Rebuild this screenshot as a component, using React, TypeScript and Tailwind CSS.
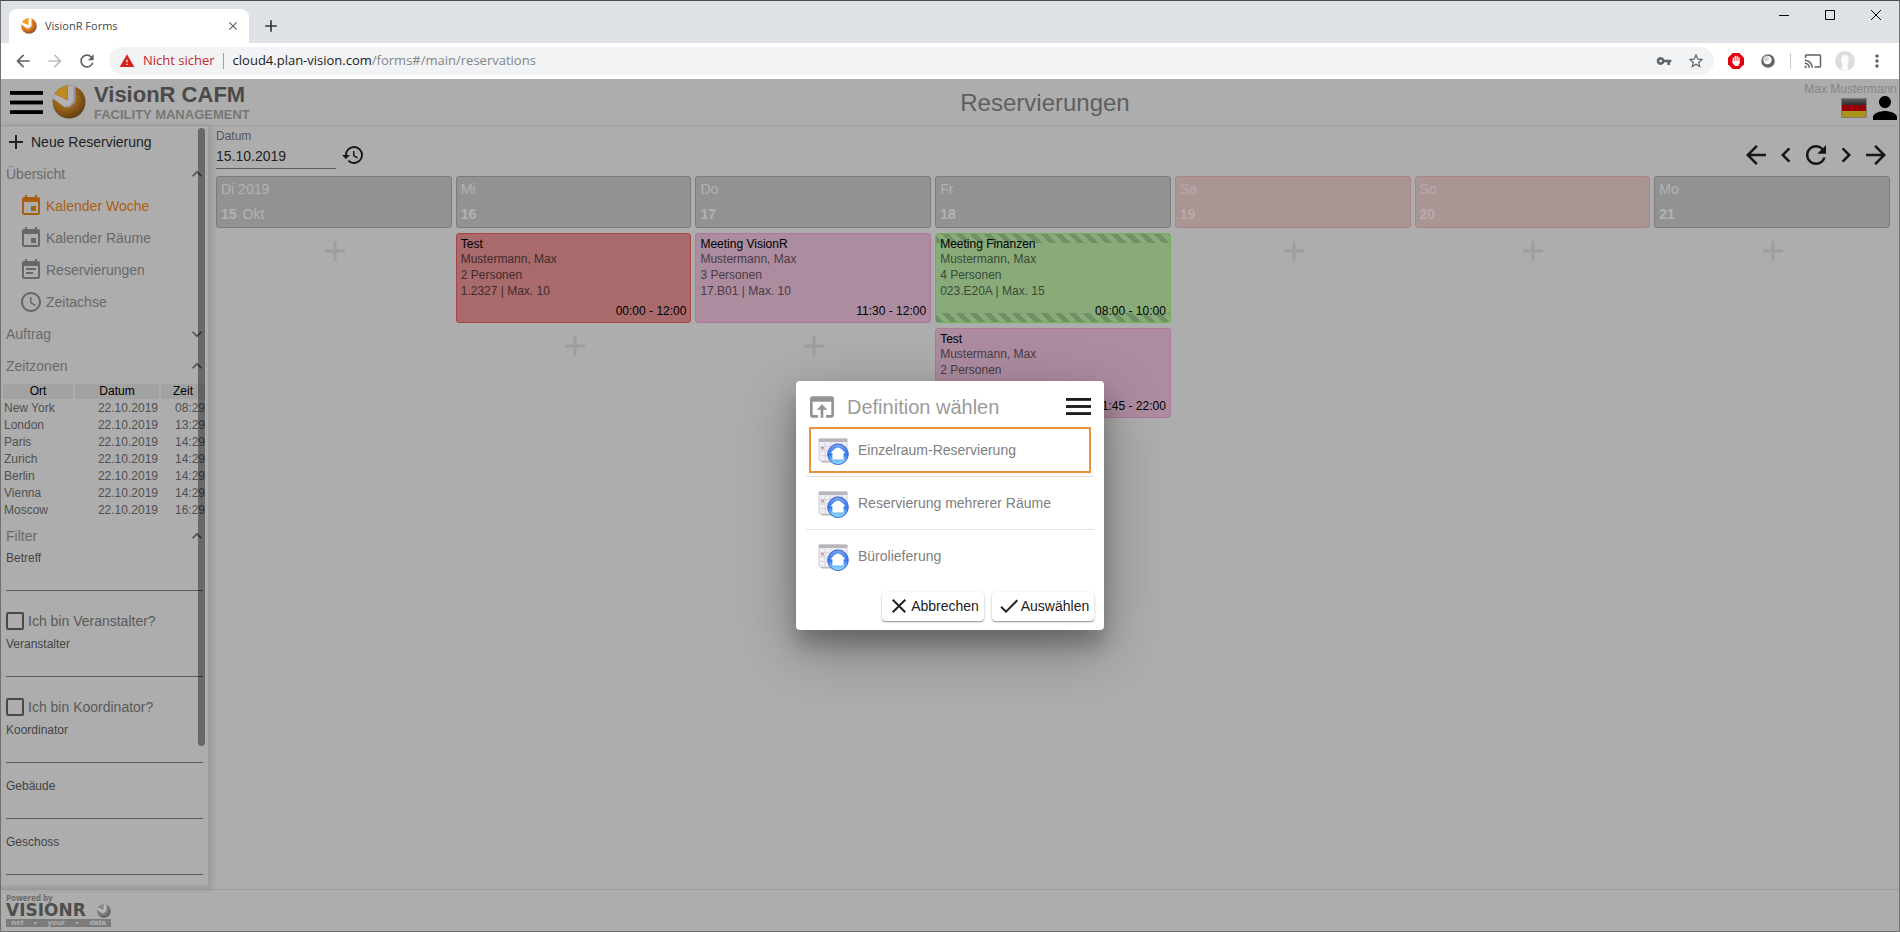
import React from "react";
import {
  MdAdd,
  MdArrowBack,
  MdArrowForward,
  MdCast,
  MdCheck,
  MdChevronLeft,
  MdChevronRight,
  MdClose,
  MdEvent,
  MdEventNote,
  MdExpandLess,
  MdExpandMore,
  MdHistory,
  MdMoreVert,
  MdOpenInBrowser,
  MdAccessTime,
  MdRefresh,
  MdStarBorder,
  MdVpnKey,
  MdWarning,
} from "react-icons/md";

function Sphere({ className, tone = "bright" }: { className: string; tone?: "bright" | "dim" | "gray" }) {
  const palette = {
    bright: ["#ffb74a", "#e07a1c", "#8a4a20", "#ffffff", "#f9a01b"],
    dim: ["#b07a24", "#95601c", "#5f3c14", "#b3b0b6", "#bd8a20"],
    gray: ["#a0a0a0", "#7d7d7d", "#555555", "#bcbcbc", "#8a8a8a"],
  }[tone];
  const id = "sphere-" + tone;
  return (
    <svg viewBox="0 0 32 32" className={className} aria-hidden="true">
      <defs>
        <radialGradient id={id} cx="0.38" cy="0.35" r="0.7">
          <stop offset="0" stopColor={palette[0]} />
          <stop offset="0.55" stopColor={palette[1]} />
          <stop offset="1" stopColor={palette[2]} />
        </radialGradient>
      </defs>
      <circle cx="16" cy="16" r="15.5" fill={`url(#${id})`} />
      <path d="M0.6 12.5 L2.5 8.5 L15 14.5 V0.5 L22 1.5 V16 L17 21 L12 21 Z" fill={palette[3]} />
      <path d="M3 8.2 A15.5 15.5 0 0 1 14.5 0.6 V13.6 Z" fill={palette[4]} />
      <path d="M22 1.6 L20 2.5 V15 L16.5 19 L12 20 L15 21.6 L18 21 L22 16.6 Z" fill="#77707a" opacity="0.4" />
    </svg>
  );
}

function Burger({ className }: { className: string }) {
  return (
    <svg viewBox="0 0 31 24" preserveAspectRatio="none" className={className} fill="currentColor" aria-hidden="true">
      <rect width="31" height="4" />
      <rect y="10" width="31" height="4" />
      <rect y="20" width="31" height="4" />
    </svg>
  );
}

function BrowserChrome() {
  return (
    <div className="shrink-0 font-['Open_Sans',sans-serif]">
      <div className="flex h-[42px] items-end bg-[#dee1e6] pl-2">
        <div className="flex h-[34px] w-60 items-center rounded-t-lg bg-white pr-[9px] pl-3">
          <Sphere className="size-4" />
          <span className="ml-2 flex-1 text-[11px] text-[#45494d]">VisionR Forms</span>
          <button aria-label="Tab schließen" className="text-[#5f6368]">
            <MdClose className="size-[14px]" />
          </button>
        </div>
        <button aria-label="Neuer Tab" className="mb-[7px] ml-3 text-[#35383b]">
          <MdAdd className="size-5" />
        </button>
        <div className="ml-auto flex h-[42px] items-start pt-[9px] pr-[18px] text-black">
          <button aria-label="Minimieren" className="mr-9">
            <svg viewBox="0 0 10 10" className="size-[10px]"><path d="M0 5.5H10" stroke="currentColor" /></svg>
          </button>
          <button aria-label="Maximieren" className="mr-9">
            <svg viewBox="0 0 10 10" className="size-[10px]"><path d="M.5 .5H9.5V9.5H.5Z" fill="none" stroke="currentColor" /></svg>
          </button>
          <button aria-label="Schließen">
            <svg viewBox="0 0 10 10" className="size-[10px]"><path d="M0 0L10 10M10 0L0 10" stroke="currentColor" /></svg>
          </button>
        </div>
      </div>
      <div className="flex h-9 items-center bg-white pr-3 pl-3 text-[#5f6368]">
        <button aria-label="Zurück"><MdArrowBack className="size-5" /></button>
        <button aria-label="Vorwärts" className="ml-3 text-[#bcbec0]"><MdArrowForward className="size-5" /></button>
        <button aria-label="Neu laden" className="ml-3"><MdRefresh className="size-5" /></button>
        <div className="ml-3 flex h-7 flex-1 items-center rounded-full bg-[#f1f3f4] pr-[9px] pl-[10px] text-[13px]">
          <MdWarning className="size-4 text-[#d6231f]" />
          <span className="ml-2 text-[#c8242c]">Nicht sicher</span>
          <span className="mr-[9px] ml-2 h-4 w-px bg-[#9aa0a6]" />
          <a href="#/main/reservations" className="flex-1 text-[#202124]">
            cloud4.plan-vision.com<span className="text-[#80868b]">/forms#/main/reservations</span>
          </a>
          <button aria-label="Passwörter"><MdVpnKey className="size-4" /></button>
          <button aria-label="Lesezeichen" className="ml-[15px]"><MdStarBorder className="size-[18px]" /></button>
        </div>
        <div className="flex items-center pl-[14px]">
          <button aria-label="Werbeblocker">
            <svg viewBox="0 0 16 16" className="size-4">
              <path d="M4.7 0H11.3L16 4.7V11.3L11.3 16H4.7L0 11.3V4.7Z" fill="#e2000f" />
              <path d="M5.3 8.5V5.2M7.2 8V3.4M9.1 8V3.4M11 9V4.6" stroke="#fff" strokeWidth="1.3" strokeLinecap="round" />
              <path d="M4.6 8H11.7V10L10.3 13H7.2L4.2 9.6L4.6 8Z" fill="#fff" />
            </svg>
          </button>
          <button aria-label="Erweiterung" className="ml-[17px]">
            <svg viewBox="0 0 14 14" className="size-[14px]">
              <circle cx="7" cy="7" r="6.8" fill="#666" />
              <circle cx="6.4" cy="6" r="4.2" fill="#fff" />
              <circle cx="5" cy="4.6" r="3" fill="#bbb" opacity="0.6" />
            </svg>
          </button>
          <span className="ml-[15px] h-4 w-px bg-[#c9ccd0]" />
          <button aria-label="Streamen" className="ml-[13px]"><MdCast className="size-[18px]" /></button>
          <button aria-label="Profil" className="ml-[13px]">
            <svg viewBox="0 0 20 20" className="size-5">
              <circle cx="10" cy="10" r="10" fill="#dcdcde" />
              <path d="M10 4C7 4 6 6.5 6.3 9C6.5 11 7.4 12.4 7.6 14L6.5 19.3H13.5L12.4 14C12.6 12.4 13.5 11 13.7 9C14 6.5 13 4 10 4Z" fill="#fafcfd" />
            </svg>
          </button>
          <button aria-label="Menü" className="ml-3"><MdMoreVert className="size-5" /></button>
        </div>
      </div>
    </div>
  );
}

function AppHeader() {
  return (
    <header className="flex h-[47px] shrink-0 items-center border-b border-[#9f9f9f]">
      <div className="flex w-[286px] items-center pl-[9px]">
        <button aria-label="Hauptmenü" className="text-black"><Burger className="h-[23px] w-[33px]" /></button>
        <Sphere className="ml-[9px] size-[34px]" tone="dim" />
        <div className="ml-2 pt-[3px] font-bold">
          <div className="text-[22px] leading-[22px] text-[#4a4a4a]">VisionR CAFM</div>
          <div className="text-[13px] leading-[18px] text-[#777777]">FACILITY MANAGEMENT</div>
        </div>
      </div>
      <h1 className="flex-1 pt-[2px] text-center text-2xl text-[#5f5f5f]">Reservierungen</h1>
      <div className="flex w-24 flex-col items-end pr-[2px] pb-[2px]">
        <div className="text-xs leading-[14px] whitespace-nowrap text-[#858585]">Max Mustermann</div>
        <div className="flex items-center">
          <button aria-label="Sprache">
            <svg viewBox="0 0 26 20" className="h-5 w-[26px]">
              <defs>
                <linearGradient id="flag-black" x1="0" y1="0" x2="0" y2="1">
                  <stop offset="0" stopColor="#5a5d5c" />
                  <stop offset="1" stopColor="#2c2e2d" />
                </linearGradient>
              </defs>
              <rect width="26" height="20" fill="#807c74" />
              <rect x="1" y="1" width="24" height="6" fill="url(#flag-black)" />
              <rect x="1" y="7" width="24" height="6" fill="#970008" />
              <rect x="1" y="13" width="24" height="6" fill="#a8921a" />
            </svg>
          </button>
          <button aria-label="Benutzer" className="ml-[6px] text-black">
            <svg viewBox="4 4 16 16" className="size-6" fill="currentColor">
              <path d="M12 12c2.21 0 4-1.79 4-4s-1.79-4-4-4-4 1.79-4 4 1.79 4 4 4zm0 2c-2.67 0-8 1.34-8 4v2h16v-2c0-2.66-5.33-4-8-4z" />
            </svg>
          </button>
        </div>
      </div>
    </header>
  );
}

function SectionHeader({ label, open = true }: { label: string; open?: boolean }) {
  const Icon = open ? MdExpandLess : MdExpandMore;
  return (
    <button className="flex h-8 w-full items-center justify-between pl-[5px] text-sm text-[#6a6a6a]">
      {label}
      <Icon className="size-5 text-[#4e4e4e]" />
    </button>
  );
}

const views = [
  { label: "Kalender Woche", Icon: MdEvent, active: true },
  { label: "Kalender Räume", Icon: MdEvent, active: false },
  { label: "Reservierungen", Icon: MdEventNote, active: false },
  { label: "Zeitachse", Icon: MdAccessTime, active: false },
];

const zones = [
  ["New York", "08:29"],
  ["London", "13:29"],
  ["Paris", "14:29"],
  ["Zurich", "14:29"],
  ["Berlin", "14:29"],
  ["Vienna", "14:29"],
  ["Moscow", "16:29"],
];

function Field({ label }: { label: string }) {
  const id = "filter-" + label.toLowerCase();
  return (
    <div className="flex flex-col pr-1 pl-[5px]">
      <label htmlFor={id} className="text-xs leading-3 text-[#444444]">{label}</label>
      <input id={id} type="text" className="h-[27px] w-full border-b border-[#5c5c5c] bg-transparent text-sm outline-none" />
    </div>
  );
}

function Check({ label }: { label: string }) {
  return (
    <label className="mt-[13px] flex h-[34px] items-center pl-[5px] text-sm text-[#5a5a5a]">
      <input type="checkbox" className="mr-1 size-[18px] appearance-none rounded-[2px] border-2 border-[#474747]" />
      {label}
    </label>
  );
}

function Sidebar() {
  return (
    <aside className="relative z-10 w-[208px] shrink-0 overflow-hidden border-r border-[#9c9c9c] bg-[#adadad] shadow-[3px_0_6px_rgba(0,0,0,0.12),inset_0_-6px_5px_-4px_rgba(0,0,0,0.14)]">
      <div className="pr-px">
        <button className="flex h-8 w-full items-center pl-[3px] text-sm text-[#222222]">
          <MdAdd className="mr-[3px] size-6" />
          Neue Reservierung
        </button>
        <SectionHeader label="Übersicht" />
        <nav>
          {views.map(({ label, Icon, active }) => (
            <a
              key={label}
              href="#/main/reservations"
              className={`flex h-8 items-center pl-[18px] text-sm ${active ? "text-[#a95f12]" : "text-[#686868]"}`}
            >
              <Icon className="mr-[3px] size-6" />
              {label}
            </a>
          ))}
        </nav>
        <SectionHeader label="Auftrag" open={false} />
        <SectionHeader label="Zeitzonen" />
        <table className="w-full border-separate border-spacing-[2px] text-xs leading-[15px] text-[#505050]">
          <thead>
            <tr className="text-black">
              <th className="w-[70px] bg-[#a2a2a2] p-0 font-normal">Ort</th>
              <th className="w-[84px] bg-[#a2a2a2] p-0 font-normal">Datum</th>
              <th className="bg-[#a2a2a2] p-0 font-normal">Zeit</th>
            </tr>
          </thead>
          <tbody>
            {zones.map(([city, time]) => (
              <tr key={city}>
                <td className="p-0 pl-px">{city}</td>
                <td className="p-0 pr-px text-right">22.10.2019</td>
                <td className="p-0 text-right">{time}</td>
              </tr>
            ))}
          </tbody>
        </table>
        <SectionHeader label="Filter" />
        <Field label="Betreff" />
        <Check label="Ich bin Veranstalter?" />
        <Field label="Veranstalter" />
        <Check label="Ich bin Koordinator?" />
        <div className="flex flex-col gap-[17px]">
          <Field label="Koordinator" />
          <Field label="Gebäude" />
          <Field label="Geschoss" />
        </div>
      </div>
      <div className="absolute top-[2px] right-[3px] h-[81%] w-[7px] rounded-full bg-black/40" />
    </aside>
  );
}

type Booking = { title: string; who: string; people: string; room: string; time: string; tone: "red" | "pink" | "green" };
type Day = { name: string; date: string; month?: string; weekend?: boolean; bookings: Booking[] };

const who = "Mustermann, Max";
const days: Day[] = [
  { name: "Di 2019", date: "15", month: "Okt", bookings: [] },
  { name: "Mi", date: "16", bookings: [{ title: "Test", who, people: "2 Personen", room: "1.2327 | Max. 10", time: "00:00 - 12:00", tone: "red" }] },
  { name: "Do", date: "17", bookings: [{ title: "Meeting VisionR", who, people: "3 Personen", room: "17.B01 | Max. 10", time: "11:30 - 12:00", tone: "pink" }] },
  {
    name: "Fr",
    date: "18",
    bookings: [
      { title: "Meeting Finanzen", who, people: "4 Personen", room: "023.E20A | Max. 15", time: "08:00 - 10:00", tone: "green" },
      { title: "Test", who, people: "2 Personen", room: "", time: "11:45 - 22:00", tone: "pink" },
    ],
  },
  { name: "Sa", date: "19", weekend: true, bookings: [] },
  { name: "So", date: "20", weekend: true, bookings: [] },
  { name: "Mo", date: "21", bookings: [] },
];

const tones = {
  red: "border-[#ab4446] bg-[#a86a6b] text-[#432a2b]",
  pink: "border-[#b07898] bg-[#ad8c9f] text-[#493b43]",
  green: "border-[#71b157] bg-[#89ab7a] text-[#3a4934]",
};

const stripes =
  "absolute inset-x-0 h-[9px] bg-[repeating-linear-gradient(45deg,#6f9165_0px,#6f9165_5px,transparent_5px,transparent_10px)]";

function BookingCard({ booking }: { booking: Booking }) {
  return (
    <article className={`relative flex h-[90px] flex-col rounded-[3px] border px-1 pt-[2px] pb-[3px] text-xs leading-4 ${tones[booking.tone]}`}>
      {booking.tone === "green" && (
        <>
          <div className={`${stripes} top-0`} />
          <div className={`${stripes} bottom-0`} />
        </>
      )}
      <div className="relative text-black">{booking.title}</div>
      <div className="leading-[15px]">{booking.who}</div>
      <div>{booking.people}</div>
      <div>{booking.room}</div>
      <div className="relative mt-auto text-right text-black">{booking.time}</div>
    </article>
  );
}

function Calendar() {
  return (
    <main className="flex min-w-0 flex-1 flex-col pr-2 pl-[7px]">
      <div className="flex h-[50px] items-center">
        <div className="flex w-[120px] flex-col pb-1">
          <label htmlFor="datum" className="text-xs leading-[14px] text-[#555555]">Datum</label>
          <input id="datum" type="text" defaultValue="15.10.2019" className="h-[26px] w-full border-b border-[#5c5c5c] bg-transparent text-sm text-[#222222] outline-none" />
        </div>
        <button aria-label="Heute" className="mt-2 ml-[5px] text-[#161616]"><MdHistory className="size-6" /></button>
        <div className="mt-2 ml-auto flex text-[#161616]">
          <button aria-label="Woche zurück"><MdArrowBack className="size-[30px]" /></button>
          <button aria-label="Tag zurück"><MdChevronLeft className="size-[30px]" /></button>
          <button aria-label="Aktualisieren"><MdRefresh className="size-[30px]" /></button>
          <button aria-label="Tag vor"><MdChevronRight className="size-[30px]" /></button>
          <button aria-label="Woche vor"><MdArrowForward className="size-[30px]" /></button>
        </div>
      </div>
      <div className="grid grid-cols-7 gap-1 pr-px">
        {days.map((day) => (
          <section key={day.date} className="flex flex-col gap-[5px]">
            <div
              className={`flex h-[52px] flex-col justify-between rounded-[3px] border px-1 pt-[2px] pb-[3px] text-sm leading-5 ${
                day.weekend ? "border-[#ac8684] bg-[#a99594] text-[#b6abab]" : "border-[#7c7c7c] bg-[#929292] text-[#b2b2b2]"
              }`}
            >
              <div>{day.name}</div>
              <div className="flex gap-[6px]">
                <b>{day.date}</b>
                {day.month}
              </div>
            </div>
            {day.bookings.map((b) => (
              <BookingCard key={b.title} booking={b} />
            ))}
            <button aria-label={`Reservierung am ${day.date}. anlegen`} className="flex h-9 items-center justify-center pl-[2px] text-[#9d9d9d]">
              <svg viewBox="0 0 20 20" className="size-5"><path d="M10 0V20M0 10H20" stroke="currentColor" strokeWidth="3" /></svg>
            </button>
          </section>
        ))}
      </div>
    </main>
  );
}

function CalendarHomeIcon() {
  return (
    <svg viewBox="0 0 31 27" className="mt-1 h-[27px] w-[31px]" aria-hidden="true">
      <defs>
        <linearGradient id="globe" x1="0" y1="0" x2="0" y2="1">
          <stop offset="0" stopColor="#7ea4ee" />
          <stop offset="0.5" stopColor="#2f78f0" />
          <stop offset="1" stopColor="#9be8ff" />
        </linearGradient>
      </defs>
      <path d="M2 22.5H22V24.5H4Z" fill="#8a8a8a" opacity="0.6" />
      <path d="M1 1H29V21L26 23H3Q1 23 1 21Z" fill="#efeff5" stroke="#c3c3cc" strokeWidth="0.8" />
      <rect x="0.8" y="0.6" width="28.6" height="3.4" rx="1" fill="#b5b5bb" />
      <path d="M2 8.5H28M2 13H28M2 17.5H28M7 4V22M12.5 4V22M18 4V22M23.5 4V22" stroke="#d3d3de" strokeWidth="0.9" />
      <path d="M3 9L6 11.5M6 9L3 11.5" stroke="#e8705c" strokeWidth="1" />
      <circle cx="20" cy="16.2" r="10.3" fill="url(#globe)" stroke="#3463cf" strokeWidth="1" />
      <path d="M20 9.4L23.2 10.8L27.6 15.2H25.6V21.6H14.4V15.2H12.4L16.8 10.8Z" fill="#ffffff" />
    </svg>
  );
}

const definitions = ["Einzelraum-Reservierung", "Reservierung mehrerer Räume", "Bürolieferung"];

function DefinitionDialog() {
  return (
    <div className="absolute inset-0 z-20 flex items-center justify-center">
      <div
        role="dialog"
        aria-labelledby="dialog-title"
        className="w-[308px] rounded bg-white px-[10px] pt-[10px] pb-[9px] shadow-[0_19px_60px_rgba(0,0,0,0.3),0_15px_20px_rgba(0,0,0,0.22)]"
      >
        <div className="flex h-8 items-center pr-[3px]">
          <MdOpenInBrowser className="size-8 text-[#939393]" />
          <h2 id="dialog-title" className="ml-[9px] flex-1 text-xl text-[#9b9b9b]">Definition wählen</h2>
          <button aria-label="Dialogmenü" className="text-[#1c1c1c]"><Burger className="h-[17px] w-[25px]" /></button>
        </div>
        <ul className="mt-px">
          {definitions.map((label, i) => (
            <li key={label} className={`h-[53px] p-[3px] ${i < 2 ? "border-b border-[#e2e2e2]" : ""}`}>
              <button
                className={`flex h-[46px] w-full items-center border-2 pl-[7px] text-sm text-[#808080] ${
                  i === 0 ? "border-[#e9913b]" : "border-transparent"
                }`}
              >
                <CalendarHomeIcon />
                <span className="ml-[9px]">{label}</span>
              </button>
            </li>
          ))}
        </ul>
        <div className="mt-[9px] flex justify-end gap-2 text-sm text-[#222222]">
          <button className="flex h-[29px] w-[102px] items-center justify-center rounded shadow-[0_1px_3px_rgba(0,0,0,0.2),0_1px_1px_rgba(0,0,0,0.3)]">
            <MdClose className="size-6" />
            Abbrechen
          </button>
          <button className="flex h-[29px] w-[102px] items-center justify-center rounded shadow-[0_1px_3px_rgba(0,0,0,0.2),0_1px_1px_rgba(0,0,0,0.3)]">
            <MdCheck className="size-6" />
            Auswählen
          </button>
        </div>
      </div>
    </div>
  );
}

function Footer() {
  return (
    <footer className="flex h-[42px] shrink-0 items-start border-t border-[#9c9c9c] pt-[3px] pl-[5px]">
      <div className="w-[105px]">
        <div className="font-['Open_Sans',sans-serif] text-[8px] leading-[10px] font-bold text-[#6b6b6b]">Powered by</div>
        <div className="flex h-[15px] items-center justify-between">
          <span className="font-['DejaVu_Sans',sans-serif] text-[17px] leading-[15px] font-bold text-[#4e4e4e]">VISIONR</span>
          <Sphere className="size-[14px]" tone="gray" />
        </div>
        <div className="mt-px flex h-2 items-center justify-around bg-[#7b7b7b] text-[8px] leading-[8px] font-bold text-[#b4b4b4]">
          <span>net</span>
          <span>•</span>
          <span>your</span>
          <span>•</span>
          <span>data</span>
        </div>
      </div>
    </footer>
  );
}

export default function App() {
  return (
    <div className="flex h-screen w-full flex-col overflow-hidden border border-[#707070] border-t-[#4a4850] bg-[#adadad] font-['Liberation_Sans',Arial,sans-serif]">
      <BrowserChrome />
      <div className="relative flex min-h-0 flex-1 flex-col">
        <AppHeader />
        <div className="flex min-h-0 flex-1">
          <Sidebar />
          <Calendar />
        </div>
        <Footer />
        <DefinitionDialog />
      </div>
    </div>
  );
}
